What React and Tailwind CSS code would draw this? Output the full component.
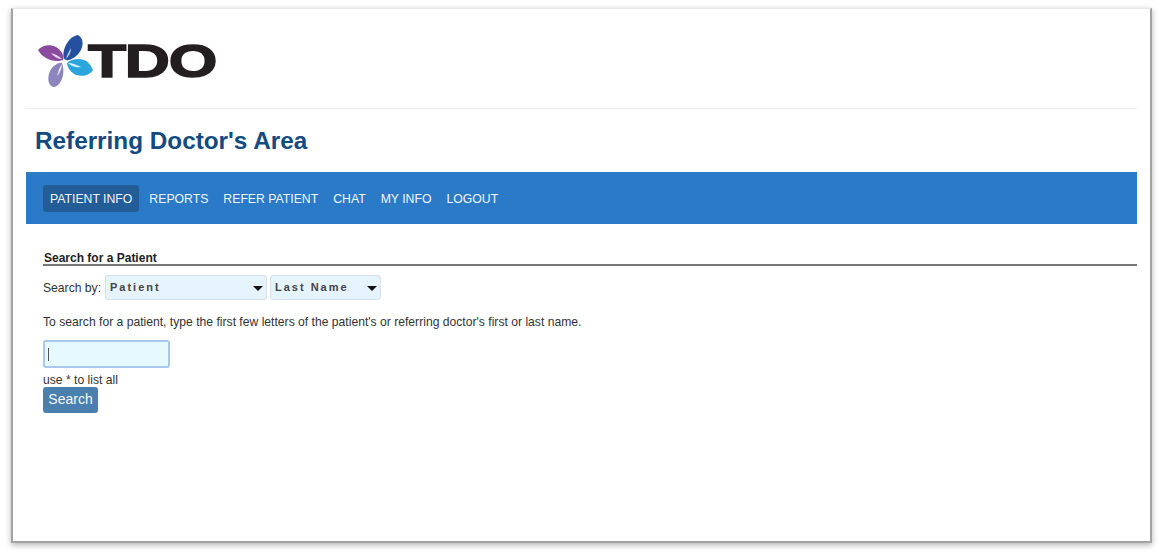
import React from 'react'

const NAV = ['PATIENT INFO', 'REPORTS', 'REFER PATIENT', 'CHAT', 'MY INFO', 'LOGOUT']

// Four petal mark of the logo
function LogoMark() {
  return (
    <svg width="55" height="53" viewBox="0 0 55 53" className="shrink-0">
      <path d="M40 0 C46 3 46 12 41 18 C37 23 31 26 28 25 C25 24 25 20 26 15 C28 8 33 1 40 0 Z" fill="#25509f" />
      <path d="M0 15 C4 10 12 9 18 12 C23 15 27 21 25 25 C20 27 13 26 8 23 C4 21 2 18 0 15 Z" fill="#8a4a9e" />
      <path d="M55 35 C52 40 45 42 38 40 C33 38 29 32 29 28 C33 24 40 23 46 25 C51 27 53 31 55 35 Z" fill="#2ba6dc" />
      <path d="M15 52 C10 50 9 43 12 36 C15 31 20 27 24 28 C26 33 26 41 23 46 C21 50 18 52 15 52 Z" fill="#8c84bd" />
      <path d="M33 13 C31 16 29 20 28 24 C31 21 33 17 33 13 Z" fill="#c4d2ee" />
      <path d="M13 18 C17 19 21 21 24 24 C20 24 16 22 13 18 Z" fill="#e6d5ec" />
      <path d="M43 32 C39 30 34 28 30 28 C33 31 38 33 43 32 Z" fill="#d8f0fa" />
      <path d="M19 41 C20 37 21 33 24 29 C24 33 22 38 19 41 Z" fill="#e6e4f3" />
    </svg>
  )
}

function Select({ width, options }) {
  return (
    <div className={`relative ${width}`}>
      <select className="appearance-none w-full h-[25px] rounded-[3px] border border-[#d5e0ea] bg-[#e5f3fd] pl-1 text-[11px] font-bold tracking-[2px] text-[#444] font-['Liberation_Sans',sans-serif]">
        {options.map((o) => <option key={o}>{o}</option>)}
      </select>
      <svg width="10" height="5" viewBox="0 0 10 5" className="absolute right-[4px] top-[11px]">
        <path d="M0 0 H10 L5 5 Z" fill="#111" />
      </svg>
    </div>
  )
}

export default function App() {
  return (
    <div className="min-h-[557px] bg-white pt-2 pl-[11px] font-['Liberation_Sans',Arial,sans-serif]">
      <div className="w-[1141px] h-[535px] bg-white border-x-2 border-b-2 border-t border-x-[#a3a3a3] border-b-[#a3a3a3] border-t-[#e8e8e8] shadow-[0_2px_6px_rgba(0,0,0,0.3)] px-[13px] overflow-hidden">
        {/* Logo */}
        <div className="h-[100px] border-b border-[#eeeeee] pt-[26px] pl-[12px] flex items-start">
          <LogoMark />
          <div className="w-[128px] -ml-[5px] mt-[4px] h-[44px]">
            <span className="block origin-left scale-x-[1.33] text-[#231f20] font-bold text-[47px] leading-[44px] tracking-[-1px] [-webkit-text-stroke:1.5px_#231f20]">
              TDO
            </span>
          </div>
        </div>

        {/* Title */}
        <h1 className="pl-[9px] pt-[18px] h-[63px] text-[24.3px] leading-[28px] font-bold text-[#144a82]">
          Referring Doctor's Area
        </h1>

        {/* Nav */}
        <nav className="h-[52px] bg-[#2a7ac8] pl-[17px] flex items-center text-[12.25px] text-[#f2f6fb]">
          {NAV.map((item, i) => (
            <a
              key={item}
              className={i === 0 ? 'h-[27px] flex items-center pt-[2px] px-[7px] mr-[3px] rounded-[3px] bg-[#235d98]' : 'h-[27px] flex items-center pt-[2px] px-[7px] mr-[1px]'}
            >
              {item}
            </a>
          ))}
        </nav>

        {/* Search */}
        <section className="pl-[17px] pt-[28px] text-[12.15px] text-[#333]">
          <h2 className="h-[14px] border-b-2 border-[#777] pl-px text-[12px] leading-[13px] font-bold text-[#222]">
            Search for a Patient
          </h2>
          <div className="mt-[8px] flex items-center h-[26px]">
            <span className="w-[62px] pt-[3px]">Search by:</span>
            <div className="flex gap-[3px]">
              <Select width="w-[162px]" options={['Patient', 'Referring Doctor']} />
              <Select width="w-[111px]" options={['Last Name', 'First Name']} />
            </div>
          </div>
          <p className="mt-[14px] leading-[16px]">
            To search for a patient, type the first few letters of the patient's or referring doctor's first or last name.
          </p>
          <div className="relative mt-[10px] w-[127px]">
            <input
              readOnly
              className="block w-full h-[28px] rounded-[3px] border-2 border-[#a9c8ee] bg-[#e6f9ff] caret-transparent outline-none"
            />
            <span className="absolute left-[5px] top-[8px] h-[13px] w-px bg-[#555]" />
          </div>
          <p className="mt-[6px] leading-[13px]">use * to list all</p>
          <button className="block h-[26px] w-[55px] pb-[2px] rounded-[3px] bg-[#4a7fae] text-[14px] text-[#f5f8fb]">
            Search
          </button>
        </section>
      </div>
    </div>
  )
}
